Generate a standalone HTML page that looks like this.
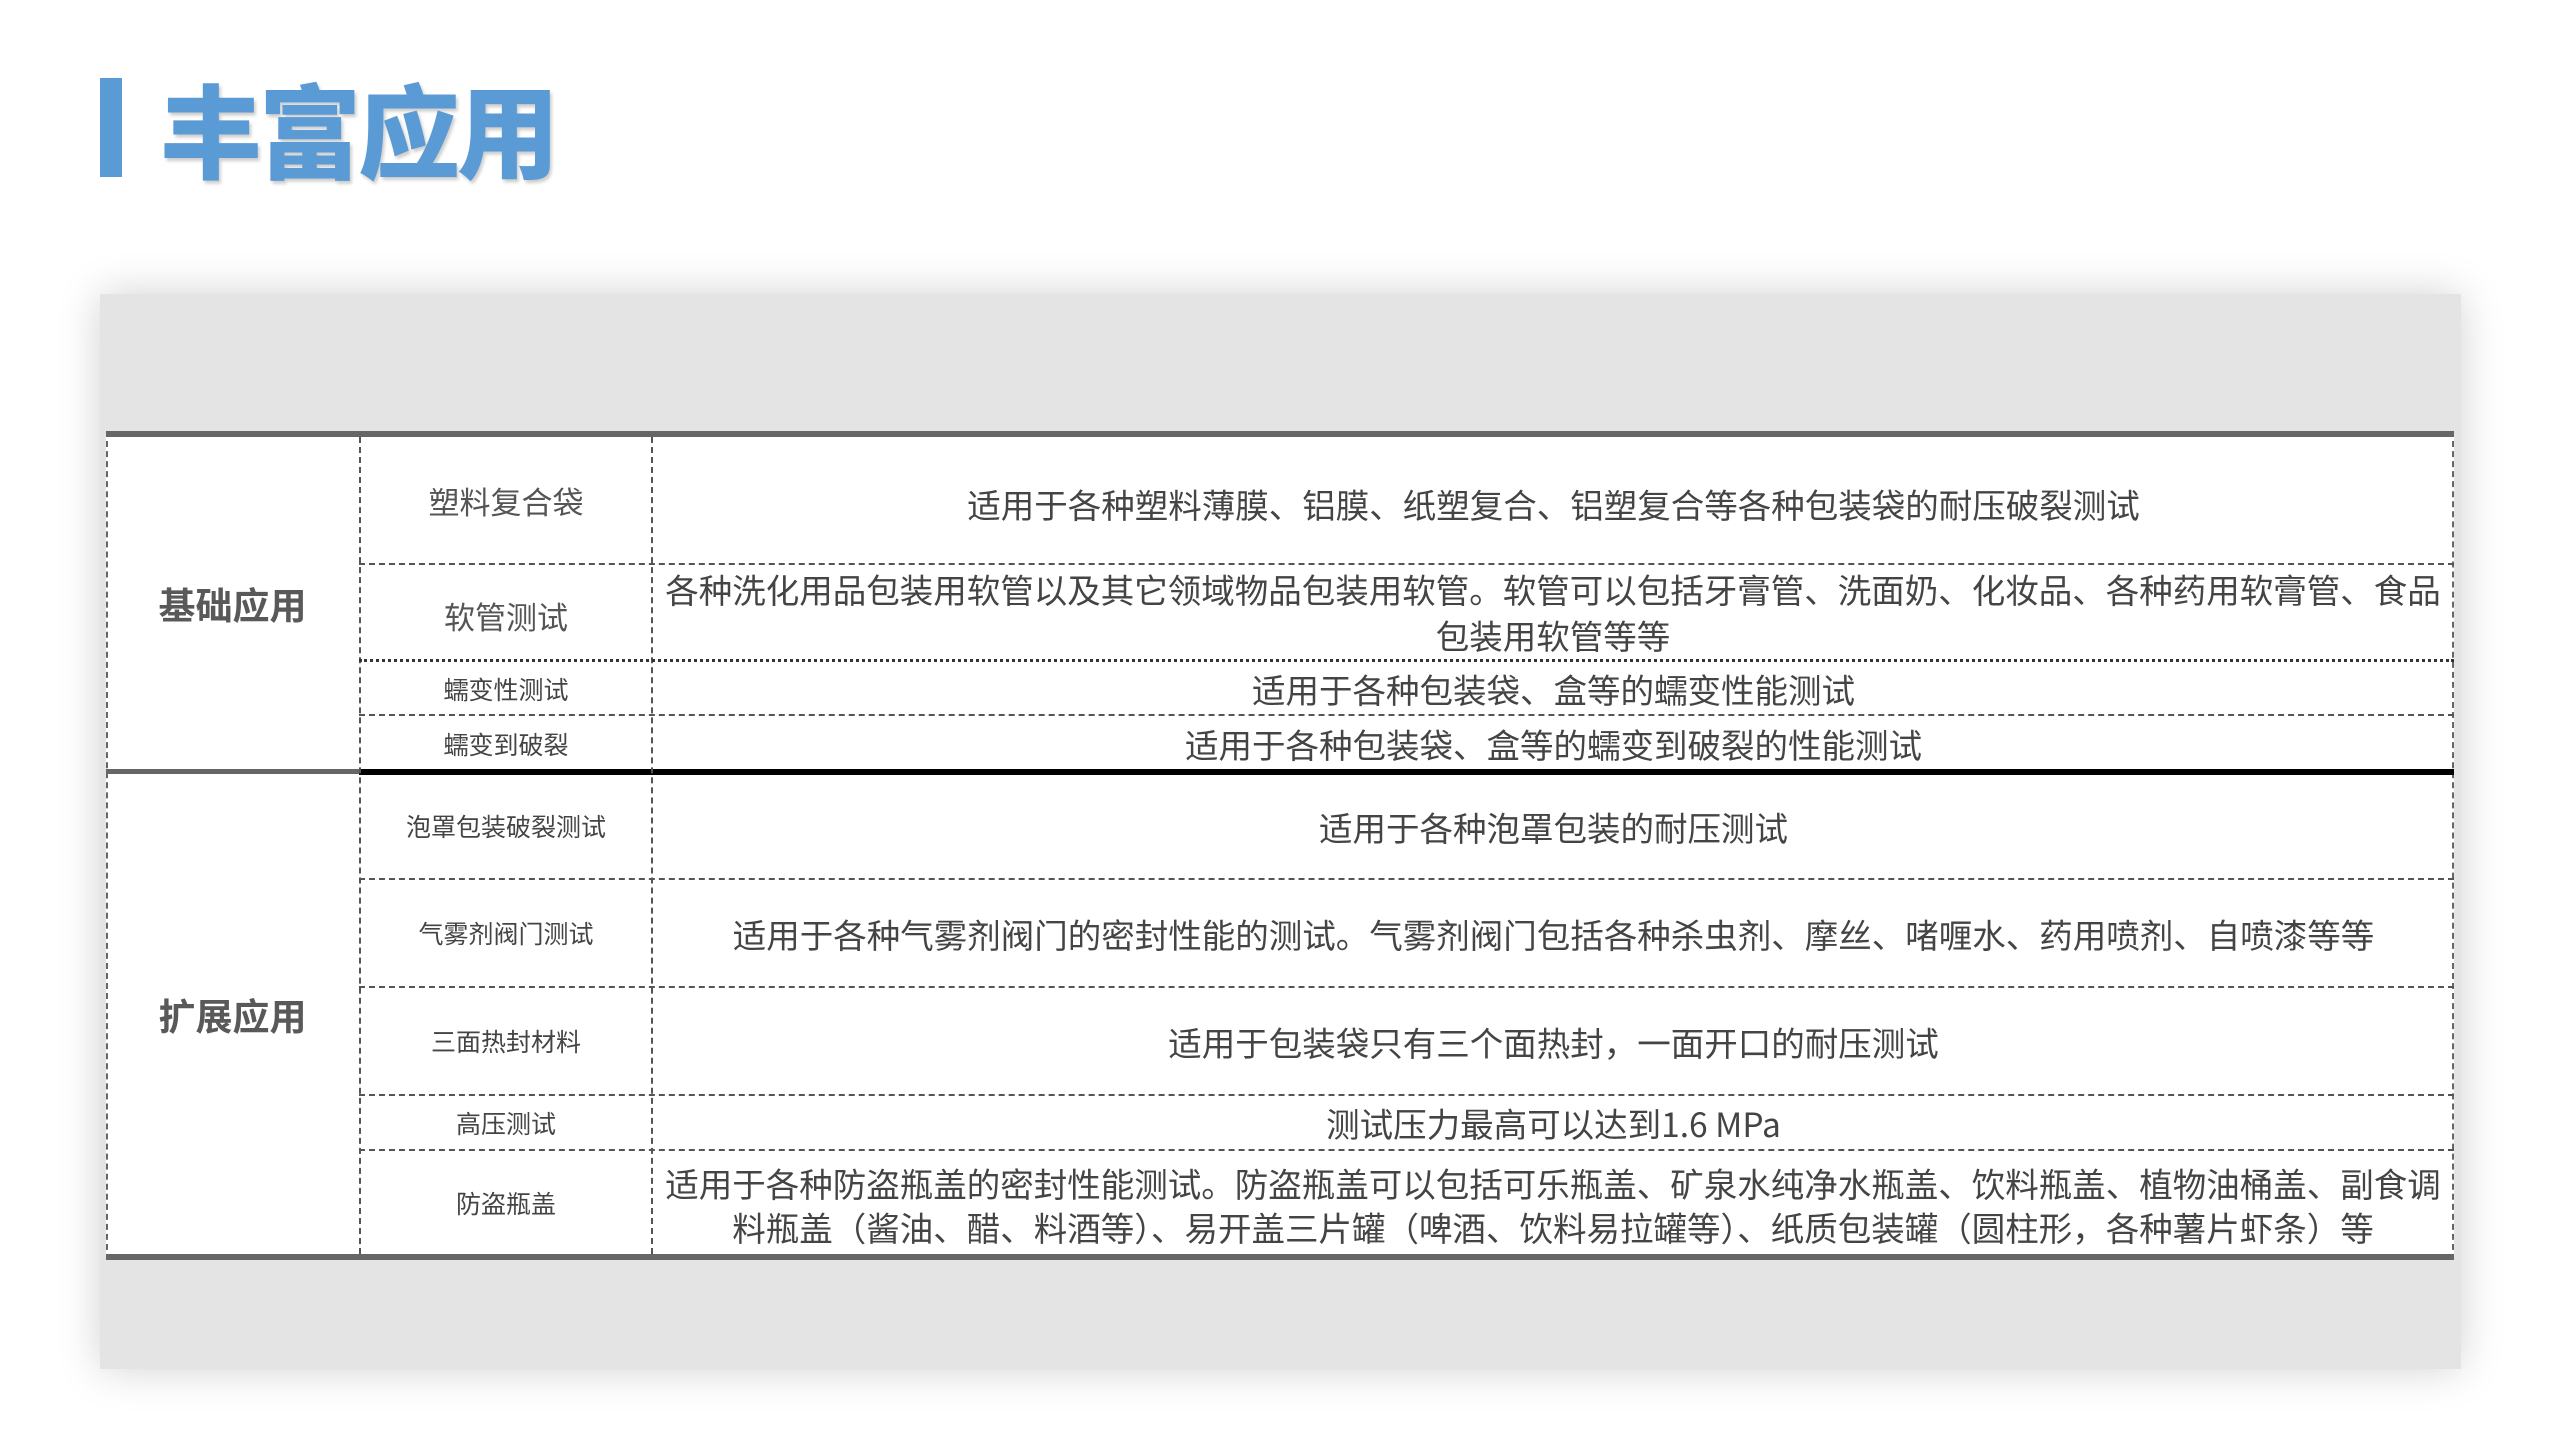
<!DOCTYPE html>
<html><head><meta charset="utf-8"><style>
*{margin:0;padding:0;box-sizing:border-box}
body{width:2560px;height:1440px;background:#fff;position:relative;overflow:hidden;font-family:"Liberation Sans","Noto Sans CJK SC",sans-serif}
.bar{position:absolute;left:100px;top:78px;width:22px;height:99px;background:#5b9bd5}
.title{position:absolute;left:160px;top:58px;font-size:102px;font-weight:900;color:#5b9bd5;line-height:140px;text-shadow:2px 3px 3px rgba(0,0,0,.2);font-family:"Noto Sans CJK SC",sans-serif;letter-spacing:-3px}
.panel{position:absolute;left:100px;top:294px;width:2361px;height:1075px;background:#e4e4e4;box-shadow:0 0 40px rgba(0,0,0,.18)}
.tbl{position:absolute;left:106px;top:431px;width:2348px;height:829px;background:#fff;border-left:2px dashed #666;border-right:2px dashed #666}
.h{position:absolute;height:0;border-top:2px dashed #555}
.v{position:absolute;width:0;border-left:2px dashed #555}
.c{position:absolute;display:flex;align-items:center;justify-content:center;text-align:center;color:#555;font-family:"Noto Sans CJK SC",sans-serif}
.d{font-size:33.5px;color:#444}
.s{font-size:25px;color:#444}
.m{font-size:31px;color:#555}
.k{font-size:37px;font-weight:700;color:#595959}
</style></head><body>
<div class="bar"></div>
<div class="title">丰富应用</div>
<div class="panel"></div>
<div class="tbl"></div>
<div style="position:absolute;left:106px;top:431px;width:2348px;height:6px;background:#666"></div>
<div style="position:absolute;left:106px;top:1254px;width:2348px;height:6px;background:#666"></div>
<div style="position:absolute;left:106px;top:769px;width:253px;height:5px;background:#666"></div>
<div style="position:absolute;left:359px;top:769px;width:2095px;height:6px;background:#000"></div>
<div class="v" style="left:359px;top:437px;height:817px"></div>
<div class="v" style="left:651px;top:437px;height:817px"></div>
<div class="h" style="left:359px;top:563px;width:2095px"></div>
<div class="h" style="left:359px;top:659px;width:2095px;border-top:3px dotted #333"></div>
<div class="h" style="left:359px;top:714px;width:2095px"></div>
<div class="h" style="left:359px;top:878px;width:2095px"></div>
<div class="h" style="left:359px;top:986px;width:2095px"></div>
<div class="h" style="left:359px;top:1094px;width:2095px"></div>
<div class="h" style="left:359px;top:1149px;width:2095px"></div>
<div class="c k" style="left:106px;top:437px;width:253px;height:332px">基础应用</div>
<div class="c k" style="left:106px;top:774px;width:253px;height:480px">扩展应用</div>
<div class="c m" style="left:361px;top:437px;width:290px;height:126px">塑料复合袋</div>
<div class="c m" style="left:361px;top:573px;width:290px;height:85px">软管测试</div>
<div class="c s" style="left:361px;top:662px;width:290px;height:53px">蠕变性测试</div>
<div class="c s" style="left:361px;top:717px;width:290px;height:53px">蠕变到破裂</div>
<div class="c s" style="left:361px;top:774px;width:290px;height:104px">泡罩包装破裂测试</div>
<div class="c s" style="left:361px;top:880px;width:290px;height:106px">气雾剂阀门测试</div>
<div class="c s" style="left:361px;top:988px;width:290px;height:106px">三面热封材料</div>
<div class="c s" style="left:361px;top:1096px;width:290px;height:53px">高压测试</div>
<div class="c s" style="left:361px;top:1151px;width:290px;height:103px">防盗瓶盖</div>
<div class="c d" style="left:653px;top:437px;width:1801px;height:132px">适用于各种塑料薄膜、铝膜、纸塑复合、铝塑复合等各种包装袋的耐压破裂测试</div>
<div class="d" style="position:absolute;left:661px;top:566px;width:1784px;line-height:46px;text-align:justify;text-align-last:center;font-family:'Noto Sans CJK SC',sans-serif;color:#444">各种洗化用品包装用软管以及其它领域物品包装用软管。软管可以包括牙膏管、洗面奶、化妆品、各种药用软膏管、食品<br>包装用软管等等</div>
<div class="c d" style="left:653px;top:662px;width:1801px;height:53px">适用于各种包装袋、盒等的蠕变性能测试</div>
<div class="c d" style="left:653px;top:717px;width:1801px;height:53px">适用于各种包装袋、盒等的蠕变到破裂的性能测试</div>
<div class="c d" style="left:653px;top:774px;width:1801px;height:104px">适用于各种泡罩包装的耐压测试</div>
<div class="c d" style="left:653px;top:880px;width:1801px;height:106px">适用于各种气雾剂阀门的密封性能的测试。气雾剂阀门包括各种杀虫剂、摩丝、啫喱水、药用喷剂、自喷漆等等</div>
<div class="c d" style="left:653px;top:988px;width:1801px;height:106px">适用于包装袋只有三个面热封，一面开口的耐压测试</div>
<div class="c d" style="left:653px;top:1096px;width:1801px;height:53px">测试压力最高可以达到1.6 MPa</div>
<div class="d" style="position:absolute;left:661px;top:1161px;width:1784px;line-height:44px;text-align:justify;text-align-last:center;font-family:'Noto Sans CJK SC',sans-serif;color:#444">适用于各种防盗瓶盖的密封性能测试。防盗瓶盖可以包括可乐瓶盖、矿泉水纯净水瓶盖、饮料瓶盖、植物油桶盖、副食调<br>料瓶盖（酱油、醋、料酒等）、易开盖三片罐（啤酒、饮料易拉罐等）、纸质包装罐（圆柱形，各种薯片虾条）等</div>
</body></html>
